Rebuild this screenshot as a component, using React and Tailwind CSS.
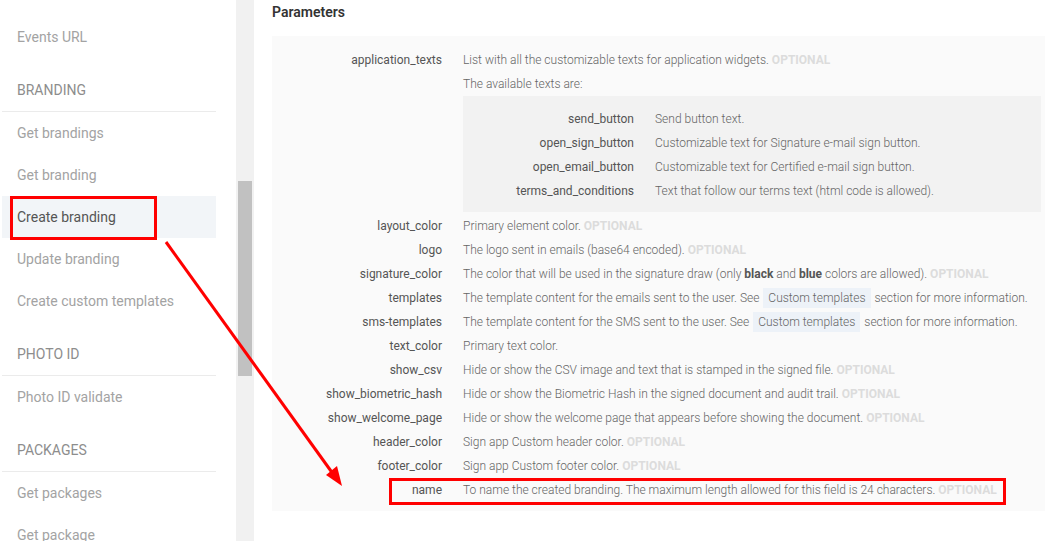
const navGroups = [
    { items: ['Events URL'] },
    { title: 'BRANDING', items: ['Get brandings', 'Get branding', 'Create branding', 'Update branding', 'Create custom templates'] },
    { title: 'PHOTO ID', items: ['Photo ID validate'] },
    { title: 'PACKAGES', items: ['Get packages', 'Get package'] },
];

const innerTexts = [
    ['send_button', 'Send button text.'],
    ['open_sign_button', 'Customizable text for Signature e-mail sign button.'],
    ['open_email_button', 'Customizable text for Certified e-mail sign button.'],
    ['terms_and_conditions', 'Text that follow our terms text (html code is allowed).'],
];

const Optional = () => (
    <span className="font-bold text-[#dcdcdc] uppercase"> OPTIONAL</span>
);

const Chip = ({ children }) => (
    <span className="bg-[#edf2f8] px-[5px] py-[3px] mx-[1px]">{children}</span>
);

const Row = ({ name, children, marked }) => (
    <div className="relative flex leading-6">
        <div className="w-[170px] shrink-0 text-right text-[#555]">{name}</div>
        <div className="pl-[21px] pr-[4px] flex-1 font-light text-[#666]">{children}</div>
        {marked && (
            <div className="absolute left-[117px] top-[0px] w-[617px] h-[27px] border-[3px] border-[#ff0000] pointer-events-none" />
        )}
    </div>
);

const Sidebar = () => (
    <div className="flex shrink-0">
        <nav className="w-[236px] pl-[2px] pt-[16px]">
            <div className="w-[214px]">
                {navGroups.map((group, gi) => (
                    <div key={gi}>
                        {group.title && (
                            <div className="pt-[22px] pb-[11px] pl-[15px] leading-5 text-[14px] text-[#8d8d8d] border-b border-[#ebebeb]">
                                {group.title}
                            </div>
                        )}
                        {group.items.map((item) => {
                            const active = item === 'Create branding';
                            return (
                                <div
                                    key={item}
                                    className={`relative h-[42px] flex items-center pl-[15px] text-[14px] ${active ? 'bg-[#f2f5f8] text-[#555]' : 'text-[#a3a3a3]'}`}
                                >
                                    {item}
                                    {active && (
                                        <div className="absolute left-[8px] top-[0px] w-[147px] h-[44px] border-[3px] border-[#ff0000]" />
                                    )}
                                </div>
                            );
                        })}
                    </div>
                ))}
            </div>
        </nav>
        <div className="w-[18px] bg-[#f1f1f1] px-[2px]">
            <div className="mt-[181px] h-[195px] bg-[#c1c1c1]" />
        </div>
    </div>
);

export default function App() {
    return (
        <div className="relative h-[541px] w-[1046px] overflow-hidden bg-white flex font-['Roboto',sans-serif] text-[12px]">
            <Sidebar />
            <main className="flex-1 pl-[18px]">
                <h2 className="h-[36px] pt-[3px] text-[14px] font-semibold text-[#333] leading-[18px]">Parameters</h2>
                <div className="bg-[#fafafa] pt-[12px] pb-[9px] mr-[1px]">
                    <Row name="application_texts">
                        <div>List with all the customizable texts for application widgets.<Optional /></div>
                        <div>The available texts are:</div>
                        <div className="bg-[#f2f2f2] pt-[11px] pb-[9px] mb-[2px]">
                            {innerTexts.map(([k, v]) => (
                                <div key={k} className="flex">
                                    <div className="w-[171px] shrink-0 text-right font-normal text-[#555]">{k}</div>
                                    <div className="pl-[21px]">{v}</div>
                                </div>
                            ))}
                        </div>
                    </Row>
                    <Row name="layout_color">Primary element color.<Optional /></Row>
                    <Row name="logo">The logo sent in emails (base64 encoded).<Optional /></Row>
                    <Row name="signature_color">
                        The color that will be used in the signature draw (only <b className="font-bold text-[#555]">black</b> and <b className="font-bold text-[#555]">blue</b> colors are allowed).<Optional />
                    </Row>
                    <Row name="templates">
                        The template content for the emails sent to the user. See <Chip>Custom templates</Chip> section for more information.
                    </Row>
                    <Row name="sms-templates">
                        The template content for the SMS sent to the user. See <Chip>Custom templates</Chip> section for more information.
                    </Row>
                    <Row name="text_color">Primary text color.</Row>
                    <Row name="show_csv">Hide or show the CSV image and text that is stamped in the signed file.<Optional /></Row>
                    <Row name="show_biometric_hash">Hide or show the Biometric Hash in the signed document and audit trail.<Optional /></Row>
                    <Row name="show_welcome_page">Hide or show the welcome page that appears before showing the document.<Optional /></Row>
                    <Row name="header_color">Sign app Custom header color.<Optional /></Row>
                    <Row name="footer_color">Sign app Custom footer color.<Optional /></Row>
                    <Row name="name" marked>
                        To name the created branding. The maximum length allowed for this field is 24 characters.<Optional />
                    </Row>
                </div>
            </main>
            <svg className="absolute inset-0 pointer-events-none" width="1046" height="541">
                <line x1="166" y1="242" x2="336" y2="478" stroke="#ff0000" strokeWidth="3" />
                <polygon points="342,486 326,475 337,466" fill="#ff0000" />
            </svg>
        </div>
    );
}
